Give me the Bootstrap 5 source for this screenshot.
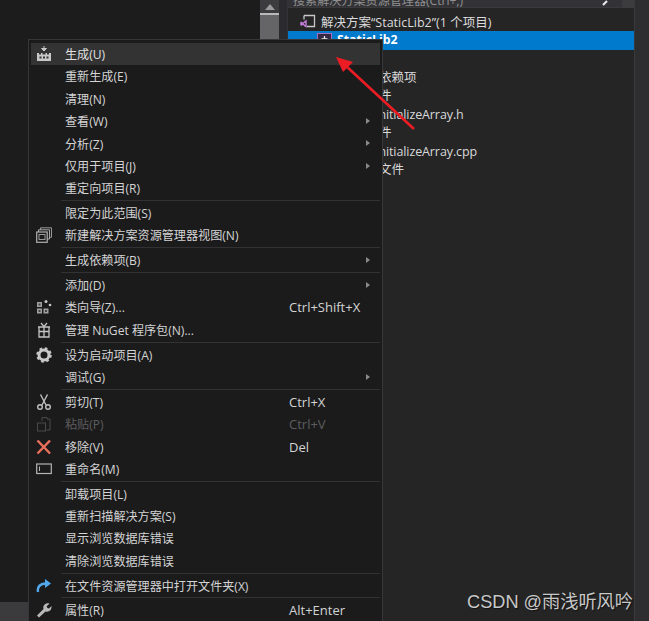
<!DOCTYPE html>
<html lang="zh-CN">
<head>
<meta charset="utf-8">
<title>解决方案资源管理器</title>
<link href="https://cdn.jsdelivr.net/npm/bootstrap@5.3.0/dist/css/bootstrap.min.css" rel="stylesheet">
<style>
html,body{height:621px;overflow:hidden}
body{background:#1c1c1c;color:#d6d6d6;font-family:"Open Sans","Noto Sans CJK SC",sans-serif;font-size:12.1px;position:relative}
.vs-shell{height:621px}
.vs-editor{width:260px}
.vs-status{height:19px;background:#3b3b3d;width:100%}
.vs-scroll{width:19px;background:#3c3c3f}
.vs-scroll-top{height:13px}
.vs-thumb{height:100%;background:#656567;border-top:2px solid #b9b9b9}
.vs-gutter{width:8px;background:#2b2b2d}
.vs-panel{width:347px;background:#252526;border-left:1px solid #333337}
.vs-search{height:8px;background:#333337;color:#8f8f8f;line-height:2px;overflow:hidden;padding-left:5px;border-bottom:1px solid #3a3a3d;position:relative}
.vs-search-icon{position:absolute;left:314px;top:0}
.vs-search-end{width:12px;height:8px;background:#3c3c3f}
.vs-tree-root{height:23px;padding-top:7px;font-size:12.5px;color:#dcdcdc;padding-left:12px;gap:5px;line-height:16px;box-sizing:border-box}
.vs-root-ico{margin-top:-4px}
.vs-tree-sel{height:19px;background:#007acc;color:#fff;font-weight:700;font-size:12.3px;padding-left:29px;gap:5px}
.vs-tree-list{padding-top:19px;font-size:12.5px;color:#d8d8d8;line-height:18.4px}
.vs-tree-a{padding-left:66px}
.vs-tree-b{padding-left:87px;letter-spacing:-.1px}
.vs-strip{flex:1;background:#2e2e30;border-left:1px solid #3a3a3d}
.vs-menu.dropdown-menu{display:block;left:28px;top:39px;width:355px;height:590px;padding:2.8px 2px 0 2px;margin:0;background:#1b1b1c;border:1px solid #37373a;border-radius:0;font-size:12.1px;--bs-dropdown-min-width:0}
.vs-item.dropdown-item{display:flex;align-items:center;height:22.4px;padding:0;color:#d4d4d4;line-height:20px;white-space:nowrap;position:relative}
.vs-item.dropdown-item:hover{background:none;color:#d4d4d4}
.vs-item.vs-active,.vs-item.vs-active:hover{background:#333334!important;color:#e0e0e0}
.vs-item.vs-off{color:#5d5d5d}
.vs-icon{width:34px;flex:none;padding-left:5px;display:flex;align-items:center}
.vs-label{width:224px;flex:none;padding-top:2px}
.vs-key{color:#d4d4d4;font-family:"Open Sans",sans-serif;font-size:13px}
.vs-off .vs-key{color:#5d5d5d}
.vs-caret{position:absolute;right:10px;top:8px;width:0;height:0;border-left:4px solid #8a8a8a;border-top:3.5px solid transparent;border-bottom:3.5px solid transparent}
.vs-sep.dropdown-divider{margin:.7px 0 .7px 30px;border-top:1px solid #323234;opacity:1;height:1px}
.vs-arrow{position:absolute;left:0;top:0;pointer-events:none;z-index:1001}
.vs-mark{position:absolute;right:16px;bottom:7px;z-index:1001;font-family:"Liberation Sans",Arimo,"Noto Sans CJK SC",sans-serif;font-size:18.2px;color:#c8c8c8;text-shadow:1px 1px 1px #111;line-height:24px}
</style>
</head>
<body>
<div class="vs-shell d-flex">
  <div class="vs-editor d-flex flex-column">
    <div class="flex-grow-1"></div>
    <div class="vs-status"></div>
  </div>
  <div class="vs-scroll d-flex flex-column">
    <div class="vs-scroll-top d-flex justify-content-center align-items-center">
      <svg width="10" height="6" viewBox="0 0 10 6"><path d="M0 6 5 0l5 6z" fill="#9a9a9a"/></svg>
    </div>
    <div class="flex-grow-1"><div class="vs-thumb"></div></div>
  </div>
  <div class="vs-gutter"></div>
  <div class="vs-panel d-flex flex-column">
    <div class="d-flex">
      <div class="vs-search flex-grow-1">搜索解决方案资源管理器(Ctrl+;)<svg class="vs-search-icon" width="8" height="6" viewBox="0 0 8 6"><path d="M1 5 5 1" stroke="#e8e8e8" stroke-width="2.200"/></svg></div>
      <div class="vs-search-end"></div>
    </div>
    <div class="vs-tree-root d-flex align-items-center">
      <svg class="vs-root-ico" width="16" height="16" viewBox="0 0 16 16"><path d="M4 2.500h10.500v11H7" fill="none" stroke="#c8c8c8" stroke-width="1.300"/><path d="M4 2.500v4" stroke="#c8c8c8" stroke-width="1.300"/><path d="M1 9l4 4 1 .5V8l-1 .5L1 12.500M1 9v3.500" fill="none" stroke="#c27bd6" stroke-width="1.500"/></svg>
      <span>解决方案“StaticLib2”(1 个项目)</span>
    </div>
    <div class="vs-tree-sel d-flex align-items-center">
      <svg width="15" height="15" viewBox="0 0 15 15"><rect x=".5" y=".5" width="14" height="14" fill="#352a44" stroke="#a56fc0"/><path d="M7.500 3v6M4.500 6h6" stroke="#e8e8e8" stroke-width="1.300"/></svg>
      <span>StaticLib2</span>
    </div>
    <div class="vs-tree-list">
      <div class="vs-tree-a">外部依赖项</div>
      <div class="vs-tree-a">头文件</div>
      <div class="vs-tree-b">InitializeArray.h</div>
      <div class="vs-tree-a">源文件</div>
      <div class="vs-tree-b">InitializeArray.cpp</div>
      <div class="vs-tree-a">资源文件</div>
    </div>
  </div>
  <div class="vs-strip"></div>
</div>

<div class="vs-menu dropdown-menu">
  <div class="vs-item vs-active dropdown-item"><span class="vs-icon"><svg width="16" height="16" viewBox="0 0 16 16"><path d="M8 0v3M5.500 2.500 8 5l2.500-2.500z" stroke="#c8c8c8" fill="#c8c8c8"/><path d="M1 15V7h2v1.500h2V7h1.500v1.500h3V7H11v1.500h2V7h2v8z" fill="#c8c8c8"/><path d="M3.500 10.500h2v2h-2zM7 10.500h2v2H7zM10.500 10.500h2v2h-2z" fill="#333"/></svg></span><span class="vs-label">生成(U)</span></div>
  <div class="vs-item dropdown-item"><span class="vs-icon"></span><span class="vs-label">重新生成(E)</span></div>
  <div class="vs-item dropdown-item"><span class="vs-icon"></span><span class="vs-label">清理(N)</span></div>
  <div class="vs-item dropdown-item"><span class="vs-icon"></span><span class="vs-label">查看(W)</span><i class="vs-caret"></i></div>
  <div class="vs-item dropdown-item"><span class="vs-icon"></span><span class="vs-label">分析(Z)</span><i class="vs-caret"></i></div>
  <div class="vs-item dropdown-item"><span class="vs-icon"></span><span class="vs-label">仅用于项目(J)</span><i class="vs-caret"></i></div>
  <div class="vs-item dropdown-item"><span class="vs-icon"></span><span class="vs-label">重定向项目(R)</span></div>
  <div class="vs-sep dropdown-divider"></div>
  <div class="vs-item dropdown-item"><span class="vs-icon"></span><span class="vs-label">限定为此范围(S)</span></div>
  <div class="vs-item dropdown-item"><span class="vs-icon"><svg width="16" height="16" viewBox="0 0 16 16"><path d="M4.500 3V.8h11v9.500H13" fill="none" stroke="#999"/><path d="M2.500 5V2.800h11V12H11" fill="none" stroke="#a8a8a8"/><rect x=".7" y="5" width="10.500" height="10.300" fill="none" stroke="#b0b0b0" stroke-width="1.200"/><rect x="3" y="7.500" width="6" height="5" fill="none" stroke="#999"/></svg></span><span class="vs-label">新建解决方案资源管理器视图(N)</span></div>
  <div class="vs-sep dropdown-divider"></div>
  <div class="vs-item dropdown-item"><span class="vs-icon"></span><span class="vs-label">生成依赖项(B)</span><i class="vs-caret"></i></div>
  <div class="vs-sep dropdown-divider"></div>
  <div class="vs-item dropdown-item"><span class="vs-icon"></span><span class="vs-label">添加(D)</span><i class="vs-caret"></i></div>
  <div class="vs-item dropdown-item"><span class="vs-icon"><svg width="16" height="16" viewBox="0 0 16 16"><rect x="1" y="3" width="5" height="5" fill="#a0a0a0"/><rect x="1" y="9.500" width="5" height="5" fill="#a0a0a0"/><rect x="7.500" y="9.500" width="5" height="5" fill="#a0a0a0"/><path d="M2.500 4.500h2v2h-2zM2.500 11h2v2h-2zM9 11h2v2H9z" fill="#444"/><circle cx="10" cy="2.500" r="1.500" fill="#c8c8c8"/><circle cx="14" cy="6" r="1.300" fill="#c8c8c8"/></svg></span><span class="vs-label">类向导(Z)...</span><span class="vs-key">Ctrl+Shift+X</span></div>
  <div class="vs-item dropdown-item"><span class="vs-icon"><svg width="16" height="16" viewBox="0 0 16 16"><path d="M3 5h10v10H3zM2 5h12M8 5v10M3 9.500h10" fill="none" stroke="#c4c4c4" stroke-width="1.300"/><path d="M8 4.500 5 1M8 4.500 11 1" fill="none" stroke="#c4c4c4" stroke-width="1.300"/></svg></span><span class="vs-label">管理 NuGet 程序包(N)...</span></div>
  <div class="vs-sep dropdown-divider"></div>
  <div class="vs-item dropdown-item"><span class="vs-icon"><svg width="16" height="16" viewBox="0 0 16 16"><circle cx="8" cy="8" r="5" fill="none" stroke="#c8c8c8" stroke-width="3"/><circle cx="8" cy="8" r="6.500" fill="none" stroke="#c8c8c8" stroke-width="2.500" stroke-dasharray="2.600 2.500"/></svg></span><span class="vs-label">设为启动项目(A)</span></div>
  <div class="vs-item dropdown-item"><span class="vs-icon"></span><span class="vs-label">调试(G)</span><i class="vs-caret"></i></div>
  <div class="vs-sep dropdown-divider"></div>
  <div class="vs-item dropdown-item"><span class="vs-icon"><svg width="16" height="16" viewBox="0 0 16 16"><path d="M4.500 .5 10 11M11.500 .5 6 11" stroke="#c0c0c0" stroke-width="1.400" fill="none"/><circle cx="4" cy="13" r="2.300" fill="none" stroke="#c0c0c0" stroke-width="1.400"/><circle cx="12" cy="13" r="2.300" fill="none" stroke="#c0c0c0" stroke-width="1.400"/></svg></span><span class="vs-label">剪切(T)</span><span class="vs-key">Ctrl+X</span></div>
  <div class="vs-item vs-off dropdown-item"><span class="vs-icon"><svg width="16" height="16" viewBox="0 0 16 16"><path d="M6 5V1.500h5V3h3v11h-3.500" fill="none" stroke="#4a4a4a"/><rect x="1.500" y="7" width="8" height="8" fill="none" stroke="#4a4a4a"/></svg></span><span class="vs-label">粘贴(P)</span><span class="vs-key">Ctrl+V</span></div>
  <div class="vs-item dropdown-item"><span class="vs-icon"><svg width="16" height="16" viewBox="0 0 16 16"><path d="M1.500 1.500 14 14.500M14 1.500 1.500 14.500" stroke="#e8705a" stroke-width="2.500"/></svg></span><span class="vs-label">移除(V)</span><span class="vs-key">Del</span></div>
  <div class="vs-item dropdown-item"><span class="vs-icon"><svg width="16" height="16" viewBox="0 0 16 16"><rect x=".7" y="3" width="14.600" height="9.500" fill="none" stroke="#b4b4b4" stroke-width="1.200"/><path d="M3.500 5.500v4.500" stroke="#b4b4b4"/></svg></span><span class="vs-label">重命名(M)</span></div>
  <div class="vs-sep dropdown-divider"></div>
  <div class="vs-item dropdown-item"><span class="vs-icon"></span><span class="vs-label">卸载项目(L)</span></div>
  <div class="vs-item dropdown-item"><span class="vs-icon"></span><span class="vs-label">重新扫描解决方案(S)</span></div>
  <div class="vs-item dropdown-item"><span class="vs-icon"></span><span class="vs-label">显示浏览数据库错误</span></div>
  <div class="vs-item dropdown-item"><span class="vs-icon"></span><span class="vs-label">清除浏览数据库错误</span></div>
  <div class="vs-sep dropdown-divider"></div>
  <div class="vs-item dropdown-item"><span class="vs-icon"><svg width="16" height="16" viewBox="0 0 16 16"><path d="M2 14C1 8 5 5.500 10 5.500" fill="none" stroke="#52a8ec" stroke-width="2.400"/><path d="M9 1 15 5.500 9 10z" fill="#52a8ec"/></svg></span><span class="vs-label">在文件资源管理器中打开文件夹(X)</span></div>
  <div class="vs-sep dropdown-divider"></div>
  <div class="vs-item dropdown-item"><span class="vs-icon"><svg width="16" height="16" viewBox="0 0 16 16"><path d="M1 13.500 7.500 7C6.500 3.500 9.500.5 13.500 1.500L10.500 4.500l1 1.500 1.500.5 2.500-2.500C16 8 13 10.500 9.500 9.500L3 15.500z" fill="#b8b8b8"/></svg></span><span class="vs-label">属性(R)</span><span class="vs-key">Alt+Enter</span></div>
</div>

<svg class="vs-arrow" width="649" height="621" viewBox="0 0 649 621"><path d="M414 129 345 65" stroke="#ec1c24" stroke-width="2.600" fill="none"/><path d="M336 57 353 62 343 72z" fill="#ec1c24"/></svg>
<div class="vs-mark">CSDN @雨浅听风吟</div>
<script src="https://cdn.jsdelivr.net/npm/bootstrap@5.3.0/dist/js/bootstrap.bundle.min.js"></script>
</body>
</html>
